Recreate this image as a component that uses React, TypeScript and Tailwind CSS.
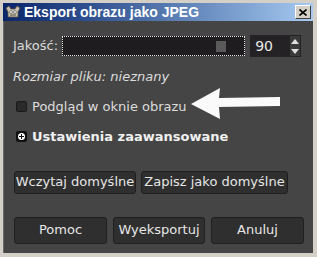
function Btn({ label, className = '' }: { label: string; className?: string }) {
  return (
    <div
      className={`flex items-center justify-center rounded-[3px] border border-[#1f1f1f] bg-[#2f2f2f] text-[13px] text-[#e6e6e6] ${className}`}
    >
      {label}
    </div>
  );
}

function GimpIcon() {
  return (
    <svg width="16" height="14" viewBox="0 0 16 14">
      <path d="M1 3 L4 1 L6 4 L10 4 L12 1 L15 3 L13 7 L13 12 L3 12 L3 7 Z" fill="#c9c2b0" stroke="#5a5040" strokeWidth="0.8" />
      <circle cx="6" cy="7" r="1.4" fill="#fff" stroke="#222" strokeWidth="0.5" />
      <circle cx="10" cy="7" r="1.4" fill="#fff" stroke="#222" strokeWidth="0.5" />
      <path d="M5 10 L11 10" stroke="#5a5040" strokeWidth="1" />
    </svg>
  );
}

export default function App() {
  return (
    <div
      className="flex h-[257px] w-[317px] flex-col bg-[#d4d0c8] p-[3px] pb-[4px] pr-[4px]"
      style={{ fontFamily: '"DejaVu Sans", "Liberation Sans", sans-serif' }}
    >
      {/* title bar */}
      <div className="flex h-[18px] items-center bg-gradient-to-r from-[#0a246a] to-[#a6caf0] pl-[2px] pr-[2px]">
        <GimpIcon />
        <span className="ml-[3px] text-[14px] font-bold text-white" style={{ fontFamily: '"Liberation Sans", sans-serif' }}>
          Eksport obrazu jako JPEG
        </span>
        <div className="ml-auto flex h-[14px] w-[16px] items-center justify-center border border-t-white border-l-white border-r-[#404040] border-b-[#404040] bg-[#d4d0c8]">
          <svg width="8" height="7" viewBox="0 0 8 7">
            <path d="M0.5 0.5 L7.5 6.5 M7.5 0.5 L0.5 6.5" stroke="#000" strokeWidth="1.6" />
          </svg>
        </div>
      </div>

      {/* body */}
      <div className="flex flex-1 flex-col border-l border-[#6a6a6a] bg-[#454545] px-[9px] text-[#dcdcdc]">
        {/* quality row */}
        <div className="mt-[15px] flex h-[20px] items-center">
          <span className="text-[13px] text-[#dcdcdc]">Jakość:</span>
          <div className="ml-[4px] flex h-[20px] w-[183px] items-center border border-dotted border-[#e0e0e0] bg-[#1e1c1e] p-[2px]">
            <div className="relative h-full w-full">
              <div className="absolute right-[16px] top-[2px] h-[11px] w-[10px] bg-[#5a5a5a]" />
            </div>
          </div>
          <div className="ml-[5px] flex h-[22px] w-[51px] items-center bg-[#242224]">
            <span className="ml-[5px] flex-1 text-[14px] text-[#e8e8e8]">90</span>
            <div className="mr-[1px] flex h-[20px] w-[10px] flex-col items-center justify-around bg-[#3a3a3a]">
              <svg width="8" height="5" viewBox="0 0 8 5">
                <path d="M0 5 L4 0 L8 5 Z" fill="#e0e0e0" />
              </svg>
              <svg width="8" height="5" viewBox="0 0 8 5">
                <path d="M0 0 L4 5 L8 0 Z" fill="#e0e0e0" />
              </svg>
            </div>
          </div>
        </div>

        {/* file size */}
        <div className="mt-[11px] text-[13px] italic text-[#dcdcdc]">Rozmiar pliku: nieznany</div>

        {/* preview checkbox */}
        <div className="relative mt-[12px] flex h-[16px] items-center">
          <div className="ml-[3px] h-[11px] w-[11px] rounded-[2px] border border-[#1a1a1a] bg-[#2a2a2a]" />
          <span className="ml-[5px] text-[13px] text-[#dcdcdc]">Podgląd w oknie obrazu</span>
          <svg className="absolute left-[176px] top-[-12px]" width="92" height="32" viewBox="0 0 92 32">
            <path d="M2 17 L31 1 L30 11 L91 10 L91 19 L30 20 L31 32 Z" fill="#fafafa" />
          </svg>
        </div>

        {/* advanced expander */}
        <div className="mt-[14px] flex h-[16px] items-center">
          <div className="ml-[3px] flex h-[11px] w-[11px] items-center justify-center rounded-[2px] bg-[#111]">
            <div className="relative h-[7px] w-[7px] rounded-full bg-white">
              <div className="absolute left-[3px] top-[1px] h-[5px] w-[1px] bg-[#111]" />
              <div className="absolute left-[1px] top-[3px] h-[1px] w-[5px] bg-[#111]" />
            </div>
          </div>
          <span className="ml-[5px] text-[13px] font-bold text-[#f0f0f0]">Ustawienia zaawansowane</span>
        </div>

        {/* defaults */}
        <div className="mt-[26px] flex gap-[5px] pl-[1px]">
          <Btn label="Wczytaj domyślne" className="h-[23px] w-[122px]" />
          <Btn label="Zapisz jako domyślne" className="h-[23px] w-[147px]" />
        </div>

        {/* actions */}
        <div className="mt-[23px] flex gap-[6px] pl-[1px]">
          <Btn label="Pomoc" className="h-[27px] w-[93px]" />
          <Btn label="Wyeksportuj" className="h-[27px] w-[92px]" />
          <Btn label="Anuluj" className="h-[27px] w-[93px]" />
        </div>
      </div>
    </div>
  );
}
